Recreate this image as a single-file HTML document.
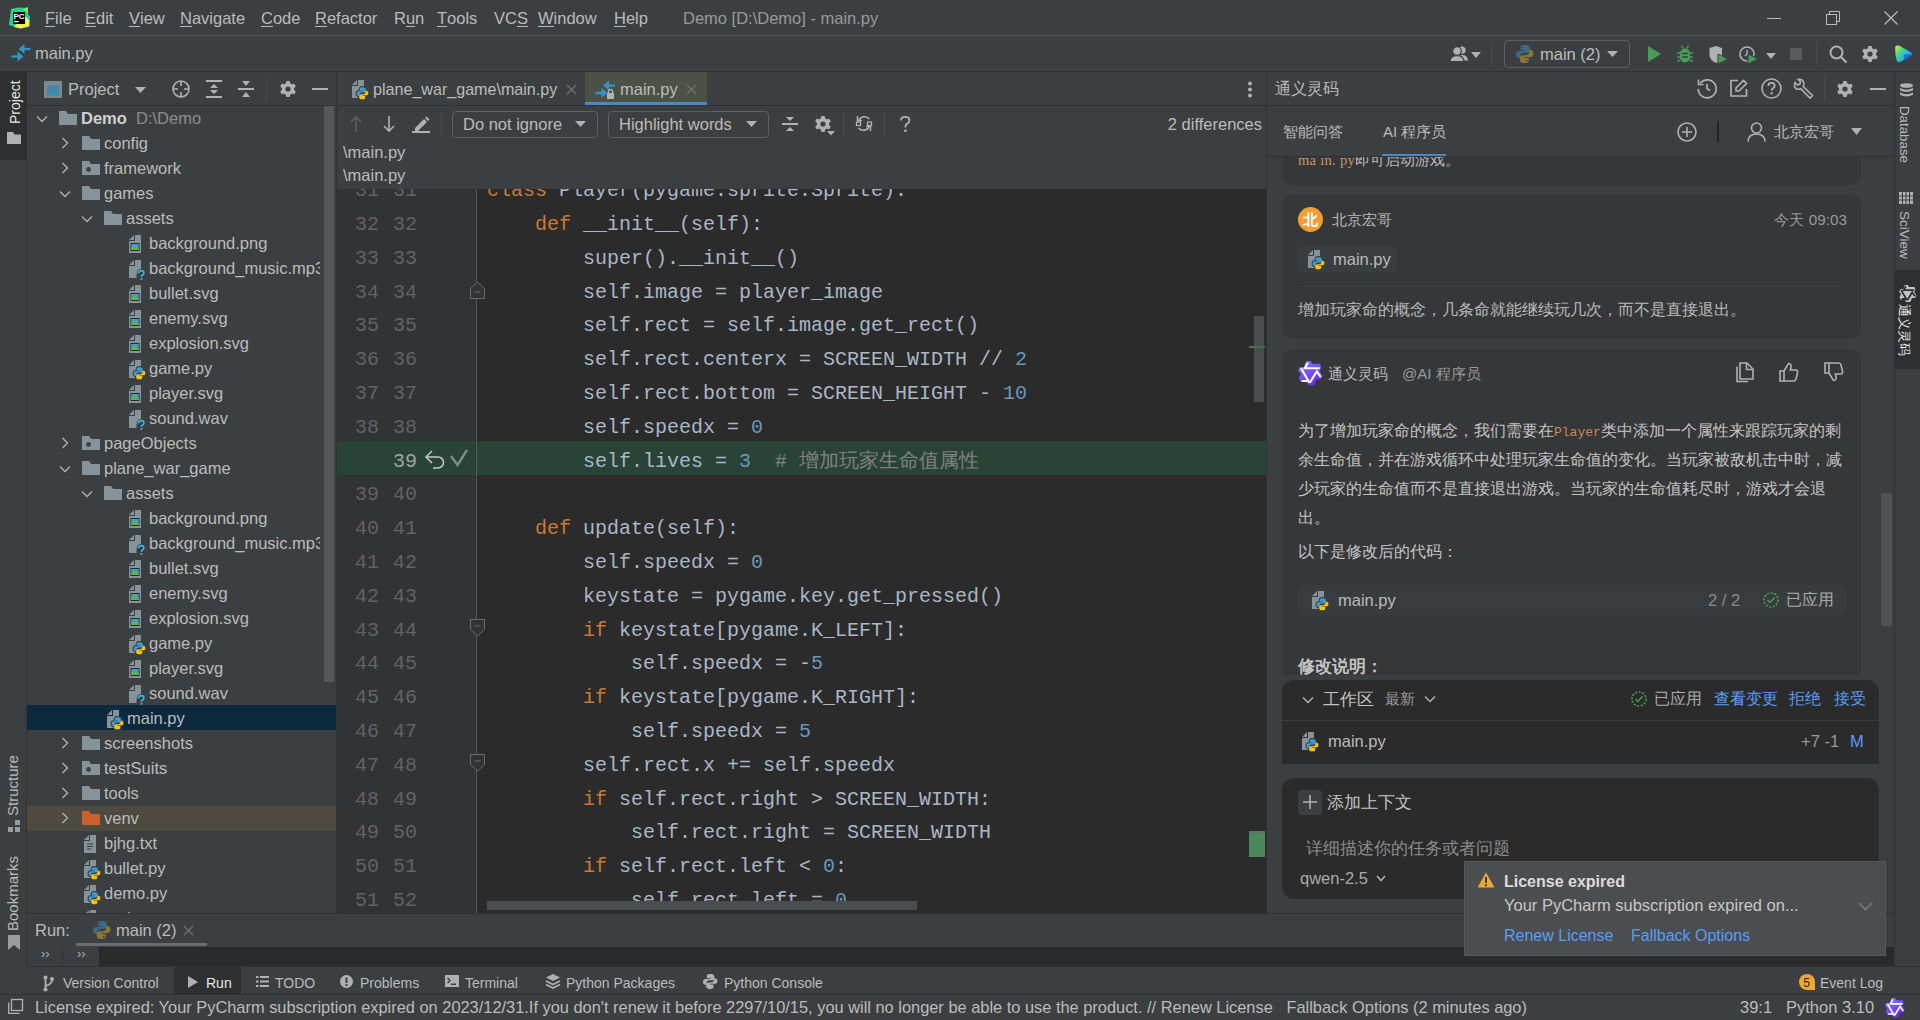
<!DOCTYPE html><html><head><meta charset="utf-8"><style>
*{margin:0;padding:0;box-sizing:border-box}
html,body{width:1920px;height:1020px;overflow:hidden;background:#3c3f41;font-family:"Liberation Sans",sans-serif;color:#bbbbbb;font-size:16.5px}
.a{position:absolute}
.t{position:absolute;white-space:nowrap;line-height:20px}
.m{position:absolute;white-space:pre;font-family:"Liberation Mono",monospace;font-size:20px;line-height:24px;color:#a9b7c6}
svg{position:absolute;overflow:visible}
u{text-decoration:none;border-bottom:1px solid #bbb;line-height:15px;display:inline-block}
.k{color:#cc7832}.n{color:#6897bb}.c{color:#808080}
</style></head><body>
<svg width="0" height="0" style="position:absolute">
<defs>
<symbol id="folder" viewBox="0 0 18 14"><path d="M0 0 H7 L9 3 H18 V14 H0 Z" fill="#87939a"/></symbol>
<symbol id="modfolder" viewBox="0 0 18 14"><path d="M0 0 H7 L9 3 H18 V14 H0 Z" fill="#87939a"/><circle cx="6.5" cy="8.5" r="2.4" fill="#3c3f41"/></symbol>
<symbol id="venvfolder" viewBox="0 0 18 14"><path d="M0 0 H7 L9 3 H18 V14 H0 Z" fill="#c9602e"/></symbol>
<symbol id="chevR" viewBox="0 0 8 12"><path d="M1.5 1 L6.5 6 L1.5 11" fill="none" stroke="#afb1b3" stroke-width="1.4"/></symbol>
<symbol id="chevD" viewBox="0 0 12 8"><path d="M1 1.5 L6 6.5 L11 1.5" fill="none" stroke="#afb1b3" stroke-width="1.4"/></symbol>
<symbol id="page" viewBox="0 0 17 20"><path d="M0 5 L5 0 V5 Z" fill="#87939a"/><path d="M6 0 H12 V18 H0 V6 H6 Z" fill="#87939a"/></symbol>
<symbol id="imgfile" viewBox="0 0 17 20"><path d="M0 5 L5 0 V5 Z" fill="#87939a"/><path d="M6 0 H12 V18 H0 V6 H6 Z" fill="#87939a"/><rect x="1.5" y="8" width="9" height="8" fill="#2b2b2b"/><rect x="2.3" y="9" width="7.4" height="6" fill="#40a0c8"/><path d="M2.3 15 V12.5 Q4 10.5 6 11.8 Q8 13 9.7 13.6 V15 Z" fill="#62b543"/></symbol>
<symbol id="unkfile" viewBox="0 0 17 20"><path d="M0 5 L5 0 V5 Z" fill="#87939a"/><path d="M6 0 H12 V11 Q7.5 11.5 7.5 15 V18 H0 V6 H6 Z" fill="#87939a"/><path d="M9.3 13.3 Q9.6 10.6 12.2 10.6 Q14.9 10.6 14.9 13 Q14.9 14.4 13.2 15.2 Q12.4 15.7 12.4 17" fill="none" stroke="#3c3f41" stroke-width="3"/><path d="M9.3 13.3 Q9.6 10.6 12.2 10.6 Q14.9 10.6 14.9 13 Q14.9 14.4 13.2 15.2 Q12.4 15.7 12.4 17" fill="none" stroke="#3fb2e6" stroke-width="1.6"/><rect x="11.5" y="18" width="1.8" height="1.8" fill="#3fb2e6"/></symbol>
<symbol id="txtfile" viewBox="0 0 17 20"><path d="M0 5 L5 0 V5 Z" fill="#87939a"/><path d="M6 0 H12 V18 H0 V6 H6 Z" fill="#87939a"/><path d="M3 9 H9 M3 11.5 H9 M3 14 H7" stroke="#3c3f41" stroke-width="1"/></symbol>
<symbol id="pylogo" viewBox="0 0 12 12.4"><path d="M5.6 0 C3.4 0 3.2 1 3.2 2.2 V3.6 H6.2 V4.2 H2 C0.7 4.2 0 5.2 0 6.6 C0 8 0.7 8.9 2 8.9 H3 V7.4 C3 6.1 4 5.3 5.2 5.3 H7.6 C8.6 5.3 9.4 4.5 9.4 3.5 V2.2 C9.4 1 8.4 0 6.9 0 Z" fill="#3d9ad6"/><path d="M5.6 0 C3.4 0 3.2 1 3.2 2.2 V3.6 H6.2 V4.2 H2 C0.7 4.2 0 5.2 0 6.6 C0 8 0.7 8.9 2 8.9 H3 V7.4 C3 6.1 4 5.3 5.2 5.3 H7.6 C8.6 5.3 9.4 4.5 9.4 3.5 V2.2 C9.4 1 8.4 0 6.9 0 Z" fill="#f2c40f" transform="rotate(180 6 6.2)"/></symbol>
<symbol id="pyfile" viewBox="0 0 17 20"><path d="M0 5 L5 0 V5 Z" fill="#87939a"/><path d="M6 0 H12 V18 H0 V6 H6 Z" fill="#87939a"/><g transform="translate(4.6,7.2) scale(0.98)"><path d="M5.6 0 C3.4 0 3.2 1 3.2 2.2 V3.6 H6.2 V4.2 H2 C0.7 4.2 0 5.2 0 6.6 C0 8 0.7 8.9 2 8.9 H3 V7.4 C3 6.1 4 5.3 5.2 5.3 H7.6 C8.6 5.3 9.4 4.5 9.4 3.5 V2.2 C9.4 1 8.4 0 6.9 0 Z" fill="none" stroke="#3c3f41" stroke-width="2.2" /><path d="M5.6 0 C3.4 0 3.2 1 3.2 2.2 V3.6 H6.2 V4.2 H2 C0.7 4.2 0 5.2 0 6.6 C0 8 0.7 8.9 2 8.9 H3 V7.4 C3 6.1 4 5.3 5.2 5.3 H7.6 C8.6 5.3 9.4 4.5 9.4 3.5 V2.2 C9.4 1 8.4 0 6.9 0 Z" fill="none" stroke="#3c3f41" stroke-width="2.2" transform="rotate(180 6 6.2)"/><path d="M5.6 0 C3.4 0 3.2 1 3.2 2.2 V3.6 H6.2 V4.2 H2 C0.7 4.2 0 5.2 0 6.6 C0 8 0.7 8.9 2 8.9 H3 V7.4 C3 6.1 4 5.3 5.2 5.3 H7.6 C8.6 5.3 9.4 4.5 9.4 3.5 V2.2 C9.4 1 8.4 0 6.9 0 Z" fill="#3d9ad6"/><path d="M5.6 0 C3.4 0 3.2 1 3.2 2.2 V3.6 H6.2 V4.2 H2 C0.7 4.2 0 5.2 0 6.6 C0 8 0.7 8.9 2 8.9 H3 V7.4 C3 6.1 4 5.3 5.2 5.3 H7.6 C8.6 5.3 9.4 4.5 9.4 3.5 V2.2 C9.4 1 8.4 0 6.9 0 Z" fill="#f2c40f" transform="rotate(180 6 6.2)"/></g></symbol>
</defs></svg>
<div class="a" style="left:0px;top:35px;width:1920px;height:1px;background:#515151;"></div>
<div class="a" style="left:0px;top:71px;width:1920px;height:1px;background:#323232;"></div>
<div class="a" style="left:0px;top:72px;width:27px;height:894px;background:#3c3f41;border-right:1px solid #323232"></div>
<div class="a" style="left:0px;top:72px;width:27px;height:88px;background:#2d2f30;"></div>
<div class="a" style="left:27px;top:105px;width:309px;height:1px;background:#323232;"></div>
<div class="a" style="left:27px;top:705px;width:309px;height:25px;background:#0d293e;"></div>
<div class="a" style="left:27px;top:806px;width:309px;height:25px;background:#4e4a3f;"></div>
<div class="a" style="left:324px;top:106px;width:10px;height:576px;background:#555759;"></div>
<div class="a" style="left:336px;top:72px;width:1px;height:841px;background:#323232;"></div>
<div class="a" style="left:337px;top:105px;width:930px;height:1px;background:#323232;"></div>
<div class="a" style="left:337px;top:189px;width:140px;height:724px;background:#313335;"></div>
<div class="a" style="left:477px;top:189px;width:790px;height:724px;background:#2b2b2b;"></div>
<div class="a" style="left:337px;top:441px;width:930px;height:34px;background:#294436;"></div>
<div class="a" style="left:476px;top:189px;width:1px;height:724px;background:#555555;"></div>
<div class="a" style="left:1266px;top:72px;width:1px;height:841px;background:#323232;"></div>
<div class="a" style="left:1267px;top:105px;width:627px;height:1px;background:#323232;"></div>
<div class="a" style="left:1267px;top:156px;width:627px;height:1px;background:#323232;"></div>
<div class="a" style="left:1894px;top:72px;width:1px;height:894px;background:#323232;"></div>
<div class="a" style="left:1895px;top:270px;width:25px;height:99px;background:#2d2f30;"></div>
<div class="a" style="left:27px;top:913px;width:1867px;height:1px;background:#323232;"></div>
<div class="a" style="left:99px;top:947px;width:1795px;height:19px;background:#2b2b2b;"></div>
<div class="a" style="left:27px;top:966px;width:1893px;height:1px;background:#323232;"></div>
<div class="a" style="left:174px;top:967px;width:67px;height:27px;background:#2d2f30;"></div>
<div class="a" style="left:0px;top:994px;width:1920px;height:1px;background:#323232;"></div>
<svg style="left:8px;top:7px" width="22" height="22" viewBox="0 0 22 22"><defs><linearGradient id="pcg" x1="0" y1="0" x2="0.3" y2="1"><stop offset="0" stop-color="#21d789"/><stop offset="1" stop-color="#2bd0a0"/></linearGradient></defs>
<path d="M3 2 L11 0.5 L20 1 L20 7 L22 10 L21 20 L12 21.5 L1 18 Z" fill="url(#pcg)"/><path d="M6 20 L13 12 L21 9 L21.5 19 L13 21.5Z" fill="#f4f34a"/><path d="M17 7 L22 10 L20 13Z" fill="#07c3f2"/><path d="M15 2 L20 0 L20 6Z" fill="#7fe560"/>
<rect x="5" y="5" width="12" height="12" fill="#000"/>
<text x="5.6" y="11.6" font-size="8" fill="#fff" font-family="Liberation Sans" font-weight="bold" letter-spacing="-0.3">PC</text><rect x="6" y="14" width="4.6" height="1.2" fill="#fff"/></svg>
<div class="t" style="left:45px;top:8px;"><u>F</u>ile</div>
<div class="t" style="left:85px;top:8px;"><u>E</u>dit</div>
<div class="t" style="left:129px;top:8px;"><u>V</u>iew</div>
<div class="t" style="left:180px;top:8px;"><u>N</u>avigate</div>
<div class="t" style="left:261px;top:8px;"><u>C</u>ode</div>
<div class="t" style="left:315px;top:8px;"><u>R</u>efactor</div>
<div class="t" style="left:394px;top:8px;">R<u>u</u>n</div>
<div class="t" style="left:437px;top:8px;"><u>T</u>ools</div>
<div class="t" style="left:494px;top:8px;">VC<u>S</u></div>
<div class="t" style="left:538px;top:8px;"><u>W</u>indow</div>
<div class="t" style="left:614px;top:8px;"><u>H</u>elp</div>
<div class="t" style="left:683px;top:8px;color:#999">Demo [D:\Demo] - main.py</div>
<div class="a" style="left:1767px;top:18px;width:14px;height:1px;background:#bbb;"></div>
<svg style="left:1826px;top:11px" width="14" height="14" viewBox="0 0 14 14"><rect x="0.5" y="3.5" width="10" height="10" fill="none" stroke="#bbb"/><path d="M3.5 3.5 V0.5 H13.5 V10.5 H10.5" fill="none" stroke="#bbb"/></svg>
<svg style="left:1884px;top:11px" width="14" height="14" viewBox="0 0 14 14"><path d="M0.5 0.5 L13.5 13.5 M13.5 0.5 L0.5 13.5" stroke="#bbb" stroke-width="1.2"/></svg>
<svg style="left:11px;top:44px" width="20" height="18" viewBox="0 0 20 18"><path d="M19.5 5 H12" stroke="#3592c4" stroke-width="2.4"/><path d="M7.5 5 L13.5 0 V10Z" fill="#3592c4"/><path d="M0.5 12.5 H8" stroke="#3592c4" stroke-width="2.4"/><path d="M12.5 12.5 L6.5 7.5 V17.5Z" fill="#3592c4"/></svg>
<div class="t" style="left:35px;top:43px;">main.py</div>
<div class="t" style="left:6px;top:124px;transform-origin:0 0;transform:rotate(-90deg);font-size:14px;color:#e6e6e6;line-height:18px">Project</div>
<svg style="left:7px;top:132px" width="14" height="12" viewBox="0 0 14 12"><path d="M0 0 H6 L7.5 2.5 H14 V12 H0Z" fill="#afb1b3"/></svg>
<div class="t" style="left:4px;top:816px;transform-origin:0 0;transform:rotate(-90deg);font-size:15px;color:#bbb;line-height:18px">Structure</div>
<svg style="left:8px;top:820px" width="13" height="13" viewBox="0 0 13 13"><rect x="7" y="0" width="5" height="5" fill="#9a9da0"/><rect x="0" y="7" width="5" height="5" fill="#9a9da0"/><rect x="7" y="7" width="5" height="5" fill="#9a9da0"/></svg>
<div class="t" style="left:4px;top:931px;transform-origin:0 0;transform:rotate(-90deg);font-size:15px;color:#bbb;line-height:18px">Bookmarks</div>
<svg style="left:8px;top:935px" width="12" height="15" viewBox="0 0 12 15"><path d="M0 0 H12 V15 L6 10 L0 15Z" fill="#9a9da0"/></svg>
<svg style="left:44px;top:81px" width="18" height="17" viewBox="0 0 18 17"><rect x="0" y="0" width="18" height="17" fill="#7f878c"/><rect x="3" y="4.5" width="12" height="10" fill="#3e8aab"/></svg>
<div class="t" style="left:68px;top:79px;">Project</div>
<svg style="left:135px;top:87px" width="11" height="6" viewBox="0 0 11 6"><path d="M0 0 H11 L5.5 6Z" fill="#afb1b3"/></svg>
<svg style="left:172px;top:80px" width="18" height="18" viewBox="0 0 18 18"><circle cx="9" cy="9" r="8" fill="none" stroke="#afb1b3" stroke-width="1.6"/><path d="M9 1 V6 M9 12 V17 M1 9 H6 M12 9 H17" stroke="#afb1b3" stroke-width="1.6"/></svg>
<svg style="left:206px;top:80px" width="16" height="18" viewBox="0 0 16 18"><rect x="0" y="0" width="16" height="2" fill="#afb1b3"/><rect x="0" y="16" width="16" height="2" fill="#afb1b3"/><path d="M8 4 L12 8 H4Z M8 14 L12 10 H4Z" fill="#afb1b3"/></svg>
<svg style="left:238px;top:80px" width="16" height="18" viewBox="0 0 16 18"><rect x="0" y="8" width="16" height="2" fill="#afb1b3"/><path d="M8 6 L12 1 H4Z M8 12 L12 17 H4Z" fill="#afb1b3"/></svg>
<div class="a" style="left:266px;top:77px;width:1px;height:24px;background:#4a4c4e;"></div>
<svg style="left:279px;top:80px" width="18" height="18" viewBox="0 0 18 18"><g transform="scale(1.0)"><path d="M9 9 m-1.6 -8 h3.2 l0.5 2.3 a6 6 0 0 1 1.9 1.1 l2.2 -0.8 l1.6 2.8 l-1.8 1.5 a6 6 0 0 1 0 2.2 l1.8 1.5 l-1.6 2.8 l-2.2 -0.8 a6 6 0 0 1 -1.9 1.1 l-0.5 2.3 h-3.2 l-0.5 -2.3 a6 6 0 0 1 -1.9 -1.1 l-2.2 0.8 l-1.6 -2.8 l1.8 -1.5 a6 6 0 0 1 0 -2.2 l-1.8 -1.5 l1.6 -2.8 l2.2 0.8 a6 6 0 0 1 1.9 -1.1z" fill="#afb1b3"/><circle cx="9" cy="9" r="2.6" fill="#3c3f41"/></g></svg>
<div class="a" style="left:312px;top:88px;width:16px;height:2px;background:#afb1b3;"></div>
<div class="a" style="left:27px;top:106px;width:293px;height:807px;overflow:hidden">
<svg style="left:9px;top:9px" width="12" height="8"><use href="#chevD"/></svg>
<svg style="left:32px;top:5px" width="18" height="14"><use href="#folder"/></svg>
<div class="t" style="left:54px;top:2px;"><b style="color:#d0d0d0">Demo</b>&nbsp; <span style="color:#8c8c8c">D:\Demo</span></div>
<svg style="left:34px;top:31px" width="8" height="12"><use href="#chevR"/></svg>
<svg style="left:55px;top:30px" width="18" height="14"><use href="#folder"/></svg>
<div class="t" style="left:77px;top:27px;">config</div>
<svg style="left:34px;top:56px" width="8" height="12"><use href="#chevR"/></svg>
<svg style="left:55px;top:55px" width="18" height="14"><use href="#modfolder"/></svg>
<div class="t" style="left:77px;top:52px;">framework</div>
<svg style="left:32px;top:84px" width="12" height="8"><use href="#chevD"/></svg>
<svg style="left:55px;top:80px" width="18" height="14"><use href="#folder"/></svg>
<div class="t" style="left:77px;top:77px;">games</div>
<svg style="left:54px;top:109px" width="12" height="8"><use href="#chevD"/></svg>
<svg style="left:77px;top:105px" width="18" height="14"><use href="#folder"/></svg>
<div class="t" style="left:99px;top:102px;">assets</div>
<svg style="left:102px;top:129px" width="17" height="20"><use href="#imgfile"/></svg>
<div class="t" style="left:122px;top:127px;">background.png</div>
<svg style="left:102px;top:154px" width="17" height="20"><use href="#unkfile"/></svg>
<div class="t" style="left:122px;top:152px;">background_music.mp3</div>
<svg style="left:102px;top:179px" width="17" height="20"><use href="#imgfile"/></svg>
<div class="t" style="left:122px;top:177px;">bullet.svg</div>
<svg style="left:102px;top:204px" width="17" height="20"><use href="#imgfile"/></svg>
<div class="t" style="left:122px;top:202px;">enemy.svg</div>
<svg style="left:102px;top:229px" width="17" height="20"><use href="#imgfile"/></svg>
<div class="t" style="left:122px;top:227px;">explosion.svg</div>
<svg style="left:102px;top:254px" width="17" height="20"><use href="#pyfile"/></svg>
<div class="t" style="left:122px;top:252px;">game.py</div>
<svg style="left:102px;top:279px" width="17" height="20"><use href="#imgfile"/></svg>
<div class="t" style="left:122px;top:277px;">player.svg</div>
<svg style="left:102px;top:304px" width="17" height="20"><use href="#unkfile"/></svg>
<div class="t" style="left:122px;top:302px;">sound.wav</div>
<svg style="left:34px;top:331px" width="8" height="12"><use href="#chevR"/></svg>
<svg style="left:55px;top:330px" width="18" height="14"><use href="#modfolder"/></svg>
<div class="t" style="left:77px;top:327px;">pageObjects</div>
<svg style="left:32px;top:359px" width="12" height="8"><use href="#chevD"/></svg>
<svg style="left:55px;top:355px" width="18" height="14"><use href="#folder"/></svg>
<div class="t" style="left:77px;top:352px;">plane_war_game</div>
<svg style="left:54px;top:384px" width="12" height="8"><use href="#chevD"/></svg>
<svg style="left:77px;top:380px" width="18" height="14"><use href="#folder"/></svg>
<div class="t" style="left:99px;top:377px;">assets</div>
<svg style="left:102px;top:404px" width="17" height="20"><use href="#imgfile"/></svg>
<div class="t" style="left:122px;top:402px;">background.png</div>
<svg style="left:102px;top:429px" width="17" height="20"><use href="#unkfile"/></svg>
<div class="t" style="left:122px;top:427px;">background_music.mp3</div>
<svg style="left:102px;top:454px" width="17" height="20"><use href="#imgfile"/></svg>
<div class="t" style="left:122px;top:452px;">bullet.svg</div>
<svg style="left:102px;top:479px" width="17" height="20"><use href="#imgfile"/></svg>
<div class="t" style="left:122px;top:477px;">enemy.svg</div>
<svg style="left:102px;top:504px" width="17" height="20"><use href="#imgfile"/></svg>
<div class="t" style="left:122px;top:502px;">explosion.svg</div>
<svg style="left:102px;top:529px" width="17" height="20"><use href="#pyfile"/></svg>
<div class="t" style="left:122px;top:527px;">game.py</div>
<svg style="left:102px;top:554px" width="17" height="20"><use href="#imgfile"/></svg>
<div class="t" style="left:122px;top:552px;">player.svg</div>
<svg style="left:102px;top:579px" width="17" height="20"><use href="#unkfile"/></svg>
<div class="t" style="left:122px;top:577px;">sound.wav</div>
<svg style="left:80px;top:604px" width="17" height="20"><use href="#pyfile"/></svg>
<div class="t" style="left:100px;top:602px;">main.py</div>
<svg style="left:34px;top:631px" width="8" height="12"><use href="#chevR"/></svg>
<svg style="left:55px;top:630px" width="18" height="14"><use href="#folder"/></svg>
<div class="t" style="left:77px;top:627px;">screenshots</div>
<svg style="left:34px;top:656px" width="8" height="12"><use href="#chevR"/></svg>
<svg style="left:55px;top:655px" width="18" height="14"><use href="#modfolder"/></svg>
<div class="t" style="left:77px;top:652px;">testSuits</div>
<svg style="left:34px;top:681px" width="8" height="12"><use href="#chevR"/></svg>
<svg style="left:55px;top:680px" width="18" height="14"><use href="#folder"/></svg>
<div class="t" style="left:77px;top:677px;">tools</div>
<svg style="left:34px;top:706px" width="8" height="12"><use href="#chevR"/></svg>
<svg style="left:55px;top:705px" width="18" height="14"><use href="#venvfolder"/></svg>
<div class="t" style="left:77px;top:702px;">venv</div>
<svg style="left:57px;top:729px" width="17" height="20"><use href="#txtfile"/></svg>
<div class="t" style="left:77px;top:727px;">bjhg.txt</div>
<svg style="left:57px;top:754px" width="17" height="20"><use href="#pyfile"/></svg>
<div class="t" style="left:77px;top:752px;">bullet.py</div>
<svg style="left:57px;top:779px" width="17" height="20"><use href="#pyfile"/></svg>
<div class="t" style="left:77px;top:777px;">demo.py</div>
<svg style="left:57px;top:804px" width="17" height="20"><use href="#pyfile"/></svg>
<div class="t" style="left:77px;top:802px;">main.py</div>
</div>
<svg style="left:352px;top:80px" width="17" height="20"><use href="#pyfile"/></svg>
<div class="t" style="left:373px;top:79px;font-size:16.1px">plane_war_game\main.py</div>
<svg style="left:567px;top:85px" width="9" height="9" viewBox="0 0 9 9"><path d="M0 0 L9 9 M9 0 L0 9" stroke="#6f7173" stroke-width="1.3"/></svg>
<div class="a" style="left:585px;top:72px;width:122px;height:33px;background:#4b5146;"></div>
<div class="a" style="left:585px;top:102px;width:122px;height:3px;background:#4a88c7;"></div>
<svg style="left:595px;top:80px" width="22" height="20" viewBox="0 0 22 20"><path d="M20 5.5 H12.5" stroke="#3592c4" stroke-width="2.4"/><path d="M8 5.5 L14 0.5 V10.5Z" fill="#3592c4"/><path d="M0.5 13 H8" stroke="#3592c4" stroke-width="2.4"/><path d="M12.5 13 L6.5 8 V18Z" fill="#3592c4"/><rect x="12" y="13" width="7" height="6" fill="#afb1b3"/><path d="M13.5 13 V11.5 A2 2 0 0 1 17.5 11.5 V13" fill="none" stroke="#afb1b3" stroke-width="1.3"/></svg>
<div class="t" style="left:620px;top:79px;">main.py</div>
<svg style="left:687px;top:85px" width="9" height="9" viewBox="0 0 9 9"><path d="M0 0 L9 9 M9 0 L0 9" stroke="#6f7173" stroke-width="1.3"/></svg>
<svg style="left:1247px;top:81px" width="6" height="18" viewBox="0 0 6 18"><circle cx="3" cy="2.5" r="2" fill="#afb1b3"/><circle cx="3" cy="8.5" r="2" fill="#afb1b3"/><circle cx="3" cy="14.5" r="2" fill="#afb1b3"/></svg>
<svg style="left:350px;top:116px" width="12" height="16" viewBox="0 0 12 16"><path d="M6 1 V16 M1 6 L6 1 L11 6" fill="none" stroke="#5f6163" stroke-width="1.6"/></svg>
<svg style="left:383px;top:116px" width="12" height="16" viewBox="0 0 12 16"><path d="M6 0 V15 M1 10 L6 15 L11 10" fill="none" stroke="#afb1b3" stroke-width="1.6"/></svg>
<svg style="left:412px;top:115px" width="18" height="18" viewBox="0 0 18 18"><path d="M3 13 L12 4 L15 7 L6 16 H3Z" fill="#afb1b3"/><path d="M13 3 L14.5 1.5 L17.5 4.5 L16 6Z" fill="#afb1b3"/><rect x="0" y="16" width="18" height="2" fill="#afb1b3"/></svg>
<div class="a" style="left:441px;top:112px;width:1px;height:24px;background:#4a4c4e;"></div>
<div class="a" style="left:452px;top:111px;width:146px;height:27px;border:1px solid #5e6060;border-radius:4px"></div>
<div class="t" style="left:463px;top:114px;">Do not ignore</div>
<svg style="left:575px;top:121px" width="11" height="6" viewBox="0 0 11 6"><path d="M0 0 H11 L5.5 6Z" fill="#afb1b3"/></svg>
<div class="a" style="left:608px;top:111px;width:161px;height:27px;border:1px solid #5e6060;border-radius:4px"></div>
<div class="t" style="left:619px;top:114px;">Highlight words</div>
<svg style="left:746px;top:121px" width="11" height="6" viewBox="0 0 11 6"><path d="M0 0 H11 L5.5 6Z" fill="#afb1b3"/></svg>
<svg style="left:782px;top:116px" width="16" height="16" viewBox="0 0 16 16"><rect x="0" y="7" width="16" height="2" fill="#afb1b3"/><path d="M8 5 L12 1 H4Z M8 11 L12 15 H4Z" fill="#afb1b3"/></svg>
<svg style="left:814px;top:115px" width="18" height="18" viewBox="0 0 18 18"><g transform="scale(1.0)"><path d="M9 9 m-1.6 -8 h3.2 l0.5 2.3 a6 6 0 0 1 1.9 1.1 l2.2 -0.8 l1.6 2.8 l-1.8 1.5 a6 6 0 0 1 0 2.2 l1.8 1.5 l-1.6 2.8 l-2.2 -0.8 a6 6 0 0 1 -1.9 1.1 l-0.5 2.3 h-3.2 l-0.5 -2.3 a6 6 0 0 1 -1.9 -1.1 l-2.2 0.8 l-1.6 -2.8 l1.8 -1.5 a6 6 0 0 1 0 -2.2 l-1.8 -1.5 l1.6 -2.8 l2.2 0.8 a6 6 0 0 1 1.9 -1.1z" fill="#afb1b3"/><circle cx="9" cy="9" r="2.6" fill="#3c3f41"/></g></svg>
<svg style="left:827px;top:131px" width="8" height="5" viewBox="0 0 8 5"><path d="M0 0 H8 L4 4.5Z" fill="#afb1b3"/></svg>
<div class="a" style="left:843px;top:112px;width:1px;height:24px;background:#4a4c4e;"></div>
<svg style="left:856px;top:114px" width="16" height="19" viewBox="0 0 16 19"><path d="M3 6 A6.5 6.5 0 0 1 13.5 5" fill="none" stroke="#afb1b3" stroke-width="1.6"/><path d="M1.5 2 V6.5 H6" fill="none" stroke="#afb1b3" stroke-width="1.5"/><path d="M13 13 A6.5 6.5 0 0 1 2.5 14" fill="none" stroke="#afb1b3" stroke-width="1.6"/><path d="M14.5 17 V12.5 H10" fill="none" stroke="#afb1b3" stroke-width="1.5"/><rect x="0.5" y="8" width="4" height="3.5" fill="none" stroke="#afb1b3" stroke-width="1.3"/><rect x="11.5" y="8" width="4" height="3.5" fill="none" stroke="#afb1b3" stroke-width="1.3"/></svg>
<div class="a" style="left:884px;top:112px;width:1px;height:24px;background:#4a4c4e;"></div>
<svg style="left:900px;top:116px" width="11" height="17" viewBox="0 0 11 17"><path d="M1 4.5 Q1 0.9 5.2 0.9 Q9.4 0.9 9.4 4.3 Q9.4 6.4 7.3 7.6 Q5.4 8.7 5.4 10.8 V11.6" fill="none" stroke="#afb1b3" stroke-width="1.9"/><rect x="4.3" y="13.6" width="2.3" height="2.3" fill="#afb1b3"/></svg>
<div class="t" style="left:1262px;top:114px;transform:translateX(-100%)">2 differences</div>
<div class="t" style="left:343px;top:142px;">\main.py</div>
<div class="t" style="left:343px;top:165px;">\main.py</div>
<div class="a" style="left:337px;top:189px;width:929px;height:724px;overflow:hidden">
<div class="m" style="left:18px;top:-9.8px;color:#606366">31</div>
<div class="m" style="left:56px;top:-9.8px;color:#606366">31</div>
<div class="m" style="left:150px;top:-9.8px"><span class="k">class</span> Player(pygame.sprite.Sprite):</div>
<div class="m" style="left:18px;top:24.0px;color:#606366">32</div>
<div class="m" style="left:56px;top:24.0px;color:#606366">32</div>
<div class="m" style="left:150px;top:24.0px">    <span class="k">def</span> __init__(self):</div>
<div class="m" style="left:18px;top:57.8px;color:#606366">33</div>
<div class="m" style="left:56px;top:57.8px;color:#606366">33</div>
<div class="m" style="left:150px;top:57.8px">        super().__init__()</div>
<div class="m" style="left:18px;top:91.6px;color:#606366">34</div>
<div class="m" style="left:56px;top:91.6px;color:#606366">34</div>
<div class="m" style="left:150px;top:91.6px">        self.image = player_image</div>
<div class="m" style="left:18px;top:125.4px;color:#606366">35</div>
<div class="m" style="left:56px;top:125.4px;color:#606366">35</div>
<div class="m" style="left:150px;top:125.4px">        self.rect = self.image.get_rect()</div>
<div class="m" style="left:18px;top:159.2px;color:#606366">36</div>
<div class="m" style="left:56px;top:159.2px;color:#606366">36</div>
<div class="m" style="left:150px;top:159.2px">        self.rect.centerx = SCREEN_WIDTH // <span class="n">2</span></div>
<div class="m" style="left:18px;top:193.0px;color:#606366">37</div>
<div class="m" style="left:56px;top:193.0px;color:#606366">37</div>
<div class="m" style="left:150px;top:193.0px">        self.rect.bottom = SCREEN_HEIGHT - <span class="n">10</span></div>
<div class="m" style="left:18px;top:226.8px;color:#606366">38</div>
<div class="m" style="left:56px;top:226.8px;color:#606366">38</div>
<div class="m" style="left:150px;top:226.8px">        self.speedx = <span class="n">0</span></div>
<div class="m" style="left:56px;top:260.6px;color:#a4a3a3">39</div>
<div class="m" style="left:150px;top:260.6px">        self.lives = <span class="n">3</span>  <span class="c"># 增加玩家生命值属性</span></div>
<div class="m" style="left:18px;top:294.4px;color:#606366">39</div>
<div class="m" style="left:56px;top:294.4px;color:#606366">40</div>
<div class="m" style="left:150px;top:294.4px"></div>
<div class="m" style="left:18px;top:328.2px;color:#606366">40</div>
<div class="m" style="left:56px;top:328.2px;color:#606366">41</div>
<div class="m" style="left:150px;top:328.2px">    <span class="k">def</span> update(self):</div>
<div class="m" style="left:18px;top:362.0px;color:#606366">41</div>
<div class="m" style="left:56px;top:362.0px;color:#606366">42</div>
<div class="m" style="left:150px;top:362.0px">        self.speedx = <span class="n">0</span></div>
<div class="m" style="left:18px;top:395.8px;color:#606366">42</div>
<div class="m" style="left:56px;top:395.8px;color:#606366">43</div>
<div class="m" style="left:150px;top:395.8px">        keystate = pygame.key.get_pressed()</div>
<div class="m" style="left:18px;top:429.6px;color:#606366">43</div>
<div class="m" style="left:56px;top:429.6px;color:#606366">44</div>
<div class="m" style="left:150px;top:429.6px">        <span class="k">if</span> keystate[pygame.K_LEFT]:</div>
<div class="m" style="left:18px;top:463.4px;color:#606366">44</div>
<div class="m" style="left:56px;top:463.4px;color:#606366">45</div>
<div class="m" style="left:150px;top:463.4px">            self.speedx = -<span class="n">5</span></div>
<div class="m" style="left:18px;top:497.2px;color:#606366">45</div>
<div class="m" style="left:56px;top:497.2px;color:#606366">46</div>
<div class="m" style="left:150px;top:497.2px">        <span class="k">if</span> keystate[pygame.K_RIGHT]:</div>
<div class="m" style="left:18px;top:531.0px;color:#606366">46</div>
<div class="m" style="left:56px;top:531.0px;color:#606366">47</div>
<div class="m" style="left:150px;top:531.0px">            self.speedx = <span class="n">5</span></div>
<div class="m" style="left:18px;top:564.8px;color:#606366">47</div>
<div class="m" style="left:56px;top:564.8px;color:#606366">48</div>
<div class="m" style="left:150px;top:564.8px">        self.rect.x += self.speedx</div>
<div class="m" style="left:18px;top:598.6px;color:#606366">48</div>
<div class="m" style="left:56px;top:598.6px;color:#606366">49</div>
<div class="m" style="left:150px;top:598.6px">        <span class="k">if</span> self.rect.right &gt; SCREEN_WIDTH:</div>
<div class="m" style="left:18px;top:632.4px;color:#606366">49</div>
<div class="m" style="left:56px;top:632.4px;color:#606366">50</div>
<div class="m" style="left:150px;top:632.4px">            self.rect.right = SCREEN_WIDTH</div>
<div class="m" style="left:18px;top:666.2px;color:#606366">50</div>
<div class="m" style="left:56px;top:666.2px;color:#606366">51</div>
<div class="m" style="left:150px;top:666.2px">        <span class="k">if</span> self.rect.left &lt; <span class="n">0</span>:</div>
<div class="m" style="left:18px;top:700.0px;color:#606366">51</div>
<div class="m" style="left:56px;top:700.0px;color:#606366">52</div>
<div class="m" style="left:150px;top:700.0px">            self.rect.left = <span class="n">0</span></div>
<div class="m" style="left:18px;top:733.8px;color:#606366">52</div>
<div class="m" style="left:56px;top:733.8px;color:#606366">53</div>
<div class="m" style="left:150px;top:733.8px"></div>
</div>
<svg style="left:424px;top:449px" width="22" height="20" viewBox="0 0 22 20"><path d="M8 2 L2 8 L8 14" fill="none" stroke="#c8c8c8" stroke-width="1.5"/><path d="M2 8 H14 A5.5 5.5 0 0 1 14 19 H9" fill="none" stroke="#c8c8c8" stroke-width="1.5"/></svg>
<svg style="left:450px;top:449px" width="19" height="18" viewBox="0 0 19 18"><path d="M1 7 L7.5 16 L17 1" fill="none" stroke="#7d8a8e" stroke-width="2.4"/></svg>
<svg style="left:469px;top:281px" width="17" height="18" viewBox="0 0 17 18"><path d="M1.5 17.5 V7.5 L8.5 1 L15.5 7.5 V17.5Z" fill="#313335" stroke="#6b6d6f" stroke-width="1"/><path d="M5.5 11 H11.5" stroke="#6b6d6f"/></svg>
<svg style="left:469px;top:619px" width="17" height="18" viewBox="0 0 17 18"><path d="M1.5 0.5 V10.5 L8.5 17 L15.5 10.5 V0.5Z" fill="#313335" stroke="#6b6d6f" stroke-width="1"/><path d="M5.5 7 H11.5" stroke="#6b6d6f"/></svg>
<svg style="left:469px;top:754px" width="17" height="18" viewBox="0 0 17 18"><path d="M1.5 0.5 V10.5 L8.5 17 L15.5 10.5 V0.5Z" fill="#313335" stroke="#6b6d6f" stroke-width="1"/><path d="M5.5 7 H11.5" stroke="#6b6d6f"/></svg>
<div class="a" style="left:1254px;top:316px;width:10px;height:86px;background:#4b4d4f;"></div>
<div class="a" style="left:1249px;top:346px;width:16px;height:2px;background:#447152;"></div>
<div class="a" style="left:1249px;top:831px;width:16px;height:3px;background:#5b7a63;"></div>
<div class="a" style="left:1249px;top:834px;width:16px;height:23px;background:#4a8a5a;"></div>
<div class="a" style="left:487px;top:901px;width:430px;height:9px;background:#4a4c4e;"></div>
<svg style="left:1450px;top:46px" width="20" height="16" viewBox="0 0 20 16"><circle cx="12" cy="4.2" r="3.6" fill="#afb1b3"/><path d="M8 14.5 Q8.5 9 12.5 9 Q17.5 9 18 14.5Z" fill="#afb1b3"/><circle cx="7" cy="5" r="4.3" stroke="#3c3f41" stroke-width="1.2" fill="#afb1b3"/><path d="M0 15.5 Q0.3 9.6 7 9.6 Q13.7 9.6 14 15.5Z" fill="#afb1b3" stroke="#3c3f41" stroke-width="1.2"/></svg>
<svg style="left:1471px;top:52px" width="10" height="6" viewBox="0 0 10 6"><path d="M0 0 H10 L5 6Z" fill="#afb1b3"/></svg>
<div class="a" style="left:1491px;top:42px;width:1px;height:24px;background:#4a4c4e;"></div>
<div class="a" style="left:1504px;top:40px;width:126px;height:28px;border:1px solid #5e6060;border-radius:4px"></div>
<svg style="left:1516px;top:45px" width="18" height="18" viewBox="0 0 18 18"><g transform="scale(1.45)"><path d="M5.6 0 C3.4 0 3.2 1 3.2 2.2 V3.6 H6.2 V4.2 H2 C0.7 4.2 0 5.2 0 6.6 C0 8 0.7 8.9 2 8.9 H3 V7.4 C3 6.1 4 5.3 5.2 5.3 H7.6 C8.6 5.3 9.4 4.5 9.4 3.5 V2.2 C9.4 1 8.4 0 6.9 0 Z" fill="#3a6a8c"/><path d="M5.6 0 C3.4 0 3.2 1 3.2 2.2 V3.6 H6.2 V4.2 H2 C0.7 4.2 0 5.2 0 6.6 C0 8 0.7 8.9 2 8.9 H3 V7.4 C3 6.1 4 5.3 5.2 5.3 H7.6 C8.6 5.3 9.4 4.5 9.4 3.5 V2.2 C9.4 1 8.4 0 6.9 0 Z" fill="#8c7637" transform="rotate(180 6 6.2)"/><circle cx="4.6" cy="1.7" r="0.6" fill="#3c3f41"/><circle cx="7.4" cy="10.7" r="0.6" fill="#3c3f41"/></g></svg>
<div class="t" style="left:1540px;top:44px;">main (2)</div>
<svg style="left:1607px;top:51px" width="11" height="6" viewBox="0 0 11 6"><path d="M0 0 H11 L5.5 6Z" fill="#afb1b3"/></svg>
<svg style="left:1648px;top:46px" width="13" height="16" viewBox="0 0 13 16"><path d="M0 0 L13 8 L0 16Z" fill="#499c54"/></svg>
<svg style="left:1677px;top:45px" width="16" height="18" viewBox="0 0 16 18"><path d="M4.5 0.5 L6 3.5 M11.5 0.5 L10 3.5" stroke="#499c54" stroke-width="1.6"/><rect x="3" y="3.5" width="10" height="14" rx="5" fill="#499c54"/><path d="M0 8 H3 M13 8 H16 M0 12 H3 M13 12 H16 M0.5 16.5 L3 15 M15.5 16.5 L13 15" stroke="#499c54" stroke-width="1.6"/><path d="M5 8.5 H11 M5 12 H11" stroke="#3c3f41" stroke-width="1.5"/></svg>
<svg style="left:1709px;top:46px" width="20" height="17" viewBox="0 0 20 17"><path d="M0.5 2 L7 0 L13 2 V9 Q13 14 7 17 Q0.5 14 0.5 9Z" fill="#afb1b3"/><path d="M7 1 V16" stroke="#3c3f41" stroke-width="0"/><path d="M9 8 L19 13 L9 18Z" fill="#499c54" stroke="#3c3f41" stroke-width="1"/></svg>
<svg style="left:1739px;top:46px" width="20" height="18" viewBox="0 0 20 18"><circle cx="8" cy="8" r="7" fill="none" stroke="#afb1b3" stroke-width="1.6"/><path d="M8 4 V8 L6 10" fill="none" stroke="#afb1b3" stroke-width="1.5"/><path d="M9 8 L19 13 L9 18Z" fill="#499c54" stroke="#3c3f41" stroke-width="1"/></svg>
<svg style="left:1766px;top:53px" width="10" height="6" viewBox="0 0 10 6"><path d="M0 0 H10 L5 6Z" fill="#afb1b3"/></svg>
<div class="a" style="left:1790px;top:48px;width:12px;height:12px;background:#595b5d;"></div>
<div class="a" style="left:1816px;top:42px;width:1px;height:24px;background:#4a4c4e;"></div>
<svg style="left:1829px;top:45px" width="19" height="19" viewBox="0 0 19 19"><circle cx="7.5" cy="7.5" r="6" fill="none" stroke="#afb1b3" stroke-width="2"/><path d="M12 12 L17.5 17.5" stroke="#afb1b3" stroke-width="2.2"/></svg>
<svg style="left:1861px;top:45px" width="18" height="18" viewBox="0 0 18 18"><g transform="scale(1.0)"><path d="M9 9 m-1.6 -8 h3.2 l0.5 2.3 a6 6 0 0 1 1.9 1.1 l2.2 -0.8 l1.6 2.8 l-1.8 1.5 a6 6 0 0 1 0 2.2 l1.8 1.5 l-1.6 2.8 l-2.2 -0.8 a6 6 0 0 1 -1.9 1.1 l-0.5 2.3 h-3.2 l-0.5 -2.3 a6 6 0 0 1 -1.9 -1.1 l-2.2 0.8 l-1.6 -2.8 l1.8 -1.5 a6 6 0 0 1 0 -2.2 l-1.8 -1.5 l1.6 -2.8 l2.2 0.8 a6 6 0 0 1 1.9 -1.1z" fill="#afb1b3"/><circle cx="9" cy="9" r="2.6" fill="#3c3f41"/></g></svg>
<svg style="left:1894px;top:45px" width="19" height="18" viewBox="0 0 19 18"><defs><linearGradient id="tl" x1="0" y1="0" x2="1" y2="0.8"><stop offset="0" stop-color="#f3e83a"/><stop offset="0.35" stop-color="#4cd68a"/><stop offset="0.7" stop-color="#1fb8e8"/><stop offset="1" stop-color="#1f6ad8"/></linearGradient></defs><path d="M3.5 0.6 Q1 0.3 1.2 3.5 Q1 10 2.8 15.5 Q3.8 18.2 6.5 16.8 L17.2 10.6 Q19.4 9 17.2 7.4 L6 0.9 Q4.6 0.3 3.5 0.6Z" fill="url(#tl)"/><path d="M9.5 9.2 L18.6 9.2 L10.2 16Z" fill="#2256c8" opacity="0.75"/></svg>
<div class="t" style="left:1275px;top:79px;font-size:15.5px">通义灵码</div>
<svg style="left:1697px;top:78px" width="20" height="20" viewBox="0 0 20 20"><path d="M3.3 5 A9 9 0 1 1 1.2 11" fill="none" stroke="#afb1b3" stroke-width="1.7"/><path d="M1.5 1.5 V6.5 H6.5" fill="none" stroke="#afb1b3" stroke-width="1.7"/><path d="M10 6 V10.5 L13 12.5" fill="none" stroke="#afb1b3" stroke-width="1.7"/></svg>
<svg style="left:1730px;top:79px" width="18" height="18" viewBox="0 0 18 18"><path d="M8 1.5 H1 V17 H16.5 V10" fill="none" stroke="#afb1b3" stroke-width="1.7"/><path d="M6 12 V9 L13.5 1.5 L16.5 4.5 L9 12Z" fill="none" stroke="#afb1b3" stroke-width="1.6"/></svg>
<svg style="left:1761px;top:78px" width="21" height="21" viewBox="0 0 21 21"><circle cx="10.5" cy="10.5" r="9.5" fill="none" stroke="#afb1b3" stroke-width="1.6"/><path d="M7.3 8 Q7.3 4.8 10.5 4.8 Q13.7 4.8 13.7 7.8 Q13.7 9.5 11.8 10.4 Q10.7 11 10.7 12.6" fill="none" stroke="#afb1b3" stroke-width="1.8"/><rect x="9.5" y="14.2" width="2.2" height="2.2" fill="#afb1b3"/></svg>
<svg style="left:1793px;top:79px" width="21" height="21" viewBox="0 0 21 21"><path d="M2 3.5 L4.5 6 L7 5 L7.5 2.5 L5 0.5 Q9 -0.5 10.5 3 Q11.5 5.5 10.3 7.5 L19.5 16.5 L17 19 L7.8 9.8 Q5 11 2.8 9.3 Q0.5 7.5 2 3.5Z" fill="none" stroke="#afb1b3" stroke-width="1.6"/></svg>
<div class="a" style="left:1824px;top:77px;width:1px;height:24px;background:#4a4c4e;"></div>
<svg style="left:1836px;top:80px" width="18" height="18" viewBox="0 0 18 18"><g transform="scale(1.0)"><path d="M9 9 m-1.6 -8 h3.2 l0.5 2.3 a6 6 0 0 1 1.9 1.1 l2.2 -0.8 l1.6 2.8 l-1.8 1.5 a6 6 0 0 1 0 2.2 l1.8 1.5 l-1.6 2.8 l-2.2 -0.8 a6 6 0 0 1 -1.9 1.1 l-0.5 2.3 h-3.2 l-0.5 -2.3 a6 6 0 0 1 -1.9 -1.1 l-2.2 0.8 l-1.6 -2.8 l1.8 -1.5 a6 6 0 0 1 0 -2.2 l-1.8 -1.5 l1.6 -2.8 l2.2 0.8 a6 6 0 0 1 1.9 -1.1z" fill="#afb1b3"/><circle cx="9" cy="9" r="2.6" fill="#3c3f41"/></g></svg>
<div class="a" style="left:1870px;top:88px;width:16px;height:2px;background:#afb1b3;"></div>
<div class="t" style="left:1283px;top:122px;font-size:15px">智能问答</div>
<div class="t" style="left:1383px;top:122px;font-size:15px">AI 程序员</div>
<div class="a" style="left:1382px;top:154px;width:64px;height:2px;background:#4a88c7;"></div>
<svg style="left:1677px;top:122px" width="20" height="20" viewBox="0 0 20 20"><circle cx="10" cy="10" r="9" fill="none" stroke="#afb1b3" stroke-width="1.6"/><path d="M10 5 V15 M5 10 H15" stroke="#afb1b3" stroke-width="1.6"/></svg>
<div class="a" style="left:1717px;top:121px;width:2px;height:21px;background:#222426;"></div>
<svg style="left:1747px;top:122px" width="20" height="20" viewBox="0 0 20 20"><circle cx="9.5" cy="6" r="5" fill="none" stroke="#afb1b3" stroke-width="1.6"/><path d="M1 19.5 Q1.5 12 9.5 12 Q17.5 12 18 19.5" fill="none" stroke="#afb1b3" stroke-width="1.6"/></svg>
<div class="t" style="left:1774px;top:122px;font-size:15px">北京宏哥</div>
<svg style="left:1851px;top:128px" width="11" height="7" viewBox="0 0 11 7"><path d="M0 0 H11 L5.5 7Z" fill="#afb1b3"/></svg>
<div class="t" style="left:1893px;top:106px;transform-origin:0 0;transform:rotate(90deg) translate(0,-20px);font-size:13.3px;line-height:18px;color:#bbb">Database</div>
<svg style="left:1899px;top:83px" width="15" height="15" viewBox="0 0 15 15"><ellipse cx="7.5" cy="2.5" rx="6.5" ry="2.3" fill="#afb1b3"/><path d="M1 5 Q7.5 8.5 14 5 V7.3 Q7.5 10.8 1 7.3Z M1 9.5 Q7.5 13 14 9.5 V11.8 Q7.5 15.3 1 11.8Z" fill="#afb1b3"/></svg>
<svg style="left:1899px;top:192px" width="14" height="12" viewBox="0 0 14 12"><path d="M0 0 H14 V12 H0Z" fill="#afb1b3"/><path d="M3.5 0 V12 M7 0 V12 M10.5 0 V12 M0 4 H14 M0 8 H14" stroke="#3c3f41" stroke-width="1"/></svg>
<div class="t" style="left:1893px;top:211px;transform-origin:0 0;transform:rotate(90deg) translate(0,-20px);font-size:13.5px;line-height:18px;color:#bbb">SciView</div>
<svg style="left:1899px;top:285px" width="18" height="18" viewBox="0 0 18 18"><g transform="scale(0.7)"><path d="M8.3 0 L12.7 0 L14.3 2.7 L22 2.7 L23.5 6.5 L21.8 9.8 L24.7 15 L23 18.5 L18.3 18.5 L16.5 24 L10.5 24.5 L8.3 21 L2.5 21 L0.8 17 L3 13 L0 9.5 L1.8 6 L6 6Z" fill="#c4c4c4"/><path d="M9.8 1.8 L6.8 7.3 H21.8 M3 7.3 L11.5 21.8 M3.8 20 H11.2 M11.8 21.8 L18.8 10.5 L22.8 16.2" fill="none" stroke="#2d2f30" stroke-width="2.6"/></g></svg>
<div class="t" style="left:1893px;top:304px;transform-origin:0 0;transform:rotate(90deg) translate(0,-20px);font-size:13px;line-height:18px;color:#e8e8e8">通义灵码</div>
<div class="a" style="left:1267px;top:157px;width:626px;height:517px;overflow:hidden">
<div class="a" style="left:15px;top:-60px;width:579px;height:88px;background:#353739;border-radius:10px"></div>
<div class="t" style="left:31px;top:-7px;font-size:15px;color:#bbb"><span style="font-family:'Liberation Serif',serif;color:#c89664;font-size:14.5px;letter-spacing:0.3px">ma in. py</span>即可启动游戏。</div>
<div class="a" style="left:15px;top:38px;width:579px;height:144px;background:#353739;border-radius:10px"></div>
</div>
<svg style="left:1298px;top:207px" width="25" height="25" viewBox="0 0 25 25"><circle cx="12.5" cy="12.5" r="12.5" fill="#f39c34"/><text x="12.5" y="18" text-anchor="middle" font-size="15" fill="#fff" font-weight="bold">北</text></svg>
<div class="t" style="left:1332px;top:210px;font-size:15px">北京宏哥</div>
<div class="t" style="left:1847px;top:210px;transform:translateX(-100%);color:#999;font-size:15.3px">今天 09:03</div>
<div class="a" style="left:1298px;top:246px;width:99px;height:26px;background:#3a3d3f;border-radius:4px"></div>
<svg style="left:1308px;top:250px" width="17" height="20"><use href="#pyfile"/></svg>
<div class="t" style="left:1333px;top:249px;">main.py</div>
<div class="a" style="left:1298px;top:286px;width:548px;height:1px;background:#3b3d3f;"></div>
<div class="t" style="left:1298px;top:300px;font-size:15.7px">增加玩家命的概念，几条命就能继续玩几次，而不是直接退出。</div>
<div class="a" style="left:1282px;top:349px;width:579px;height:326px;background:#353739;border-radius:10px 10px 0 0"></div>
<svg style="left:1298px;top:361px" width="25" height="25" viewBox="0 0 25 25"><defs><linearGradient id="tyg" x1="0" y1="0" x2="0.6" y2="1"><stop offset="0" stop-color="#7f7dff"/><stop offset="1" stop-color="#6a2bf0"/></linearGradient></defs><path d="M8.3 0 L12.7 0 L14.3 2.7 L22 2.7 L23.5 6.5 L21.8 9.8 L24.7 15 L23 18.5 L18.3 18.5 L16.5 24 L10.5 24.5 L8.3 21 L2.5 21 L0.8 17 L3 13 L0 9.5 L1.8 6 L6 6Z" fill="url(#tyg)"/><path d="M9.8 1.8 L6.8 7.3 H21.8 M3 7.3 L11.5 21.8 M3.8 20 H11.2 M11.8 21.8 L18.8 10.5 L22.8 16.2" fill="none" stroke="#fff" stroke-width="2.1" stroke-linejoin="miter"/></svg>
<div class="t" style="left:1328px;top:364px;font-size:15px">通义灵码</div>
<div class="t" style="left:1402px;top:364px;font-size:15px;color:#999">@AI 程序员</div>
<svg style="left:1735px;top:362px" width="19" height="20" viewBox="0 0 19 20"><path d="M5 1 H12 L18 7 V17 H5Z" fill="none" stroke="#afb1b3" stroke-width="1.6"/><path d="M11.5 1 V7.5 H18" fill="none" stroke="#afb1b3" stroke-width="1.6"/><path d="M2 4.5 V19.5 H13" fill="none" stroke="#afb1b3" stroke-width="1.6"/></svg>
<svg style="left:1779px;top:362px" width="20" height="20" viewBox="0 0 20 20"><path d="M1 9 H5 V19 H1Z" fill="none" stroke="#afb1b3" stroke-width="1.6"/><path d="M5 9 L9.5 1.5 Q12.5 1.5 12 5 L11.3 8 H17 Q19 8.5 18.5 11 L17 17 Q16.5 19 14.5 19 H5" fill="none" stroke="#afb1b3" stroke-width="1.6"/></svg>
<svg style="left:1824px;top:362px" width="20" height="20" viewBox="0 0 20 20"><path d="M1 1 H5 V11 H1Z" fill="none" stroke="#afb1b3" stroke-width="1.6"/><path d="M5 11 L9.5 18.5 Q12.5 18.5 12 15 L11.3 12 H17 Q19 11.5 18.5 9 L17 3 Q16.5 1 14.5 1 H5" fill="none" stroke="#afb1b3" stroke-width="1.6"/></svg>
<div class="t" style="left:1298px;top:421px;font-size:16px;color:#c4c4c4">为了增加玩家命的概念，我们需要在<span style="font-family:'Liberation Mono',monospace;color:#c8875a;font-size:13px">Player</span>类中添加一个属性来跟踪玩家的剩</div>
<div class="t" style="left:1298px;top:450px;font-size:16px;color:#c4c4c4">余生命值，并在游戏循环中处理玩家生命值的变化。当玩家被敌机击中时，减</div>
<div class="t" style="left:1298px;top:479px;font-size:16px;color:#c4c4c4">少玩家的生命值而不是直接退出游戏。当玩家的生命值耗尽时，游戏才会退</div>
<div class="t" style="left:1298px;top:508px;font-size:16px;color:#c4c4c4">出。</div>
<div class="t" style="left:1298px;top:542px;font-size:16px;color:#c4c4c4">以下是修改后的代码：</div>
<div class="a" style="left:1298px;top:585px;width:548px;height:30px;background:#393c3e;border-radius:6px"></div>
<svg style="left:1312px;top:591px" width="17" height="20"><use href="#pyfile"/></svg>
<div class="t" style="left:1338px;top:590px;">main.py</div>
<div class="t" style="left:1708px;top:590px;color:#8a8a8a">2 / 2</div>
<svg style="left:1763px;top:592px" width="16" height="16" viewBox="0 0 16 16"><circle cx="8" cy="8" r="7" fill="none" stroke="#499c54" stroke-width="1.6" stroke-dasharray="2 1.6"/><path d="M4.5 8 L7 10.5 L11.5 5.5" fill="none" stroke="#499c54" stroke-width="1.5"/></svg>
<div class="t" style="left:1786px;top:590px;font-size:16px;color:#aaa">已应用</div>
<div class="a" style="left:1282px;top:656px;width:579px;height:19px;overflow:hidden"><div class="t" style="left:16px;top:1px;font-size:17px;font-weight:bold;color:#c4c4c4">修改说明：</div></div>
<div class="a" style="left:1881px;top:493px;width:11px;height:133px;background:#4f5153;border-radius:2px"></div>
<div class="a" style="left:1282px;top:680px;width:597px;height:84px;background:#2b2b2b;border-radius:12px 12px 0 0"></div>
<div class="a" style="left:1282px;top:720px;width:597px;height:1px;background:#3a3c3e;"></div>
<svg style="left:1302px;top:696px" width="12" height="8" viewBox="0 0 12 8"><path d="M1 1.5 L6 6.5 L11 1.5" fill="none" stroke="#afb1b3" stroke-width="1.5"/></svg>
<div class="t" style="left:1323px;top:689px;font-size:16.5px;color:#c4c4c4">工作区</div>
<div class="t" style="left:1385px;top:689px;font-size:15px;color:#999">最新</div>
<svg style="left:1424px;top:695px" width="12" height="8" viewBox="0 0 12 8"><path d="M1 1.5 L6 6.5 L11 1.5" fill="none" stroke="#afb1b3" stroke-width="1.5"/></svg>
<svg style="left:1631px;top:691px" width="16" height="16" viewBox="0 0 16 16"><circle cx="8" cy="8" r="7" fill="none" stroke="#499c54" stroke-width="1.6" stroke-dasharray="2 1.6"/><path d="M4.5 8 L7 10.5 L11.5 5.5" fill="none" stroke="#499c54" stroke-width="1.5"/></svg>
<div class="t" style="left:1654px;top:689px;font-size:16px;color:#aaa">已应用</div>
<div class="t" style="left:1714px;top:689px;font-size:16px;color:#589df6">查看变更</div>
<div class="t" style="left:1789px;top:689px;font-size:16px;color:#589df6">拒绝</div>
<div class="t" style="left:1834px;top:689px;font-size:16px;color:#589df6">接受</div>
<svg style="left:1302px;top:732px" width="17" height="20"><use href="#pyfile"/></svg>
<div class="t" style="left:1328px;top:731px;">main.py</div>
<div class="t" style="left:1801px;top:731px;color:#999">+7 -1</div>
<div class="t" style="left:1850px;top:731px;color:#589df6">M</div>
<div class="a" style="left:1282px;top:778px;width:597px;height:121px;background:#2b2b2b;border-radius:12px"></div>
<div class="a" style="left:1298px;top:790px;width:24px;height:25px;background:#3c3f41;border-radius:4px"></div>
<svg style="left:1302px;top:794px" width="16" height="16" viewBox="0 0 16 16"><path d="M8 1 V15 M1 8 H15" stroke="#afb1b3" stroke-width="1.6"/></svg>
<div class="t" style="left:1327px;top:792px;font-size:16.5px;color:#c4c4c4">添加上下文</div>
<div class="t" style="left:1306px;top:838px;font-size:16.5px;color:#8c8c8c">详细描述你的任务或者问题</div>
<div class="t" style="left:1300px;top:868px;color:#aaa">qwen-2.5</div>
<svg style="left:1376px;top:875px" width="10" height="7" viewBox="0 0 10 7"><path d="M1 1 L5 5.5 L9 1" fill="none" stroke="#afb1b3" stroke-width="1.6"/></svg>
<div class="t" style="left:35px;top:920px;">Run:</div>
<svg style="left:93px;top:921px" width="18" height="18" viewBox="0 0 18 18"><g transform="scale(1.45)"><path d="M5.6 0 C3.4 0 3.2 1 3.2 2.2 V3.6 H6.2 V4.2 H2 C0.7 4.2 0 5.2 0 6.6 C0 8 0.7 8.9 2 8.9 H3 V7.4 C3 6.1 4 5.3 5.2 5.3 H7.6 C8.6 5.3 9.4 4.5 9.4 3.5 V2.2 C9.4 1 8.4 0 6.9 0 Z" fill="#3a6a8c"/><path d="M5.6 0 C3.4 0 3.2 1 3.2 2.2 V3.6 H6.2 V4.2 H2 C0.7 4.2 0 5.2 0 6.6 C0 8 0.7 8.9 2 8.9 H3 V7.4 C3 6.1 4 5.3 5.2 5.3 H7.6 C8.6 5.3 9.4 4.5 9.4 3.5 V2.2 C9.4 1 8.4 0 6.9 0 Z" fill="#8c7637" transform="rotate(180 6 6.2)"/><circle cx="4.6" cy="1.7" r="0.6" fill="#3c3f41"/><circle cx="7.4" cy="10.7" r="0.6" fill="#3c3f41"/></g></svg>
<div class="t" style="left:116px;top:920px;">main (2)</div>
<svg style="left:184px;top:926px" width="9" height="9" viewBox="0 0 9 9"><path d="M0 0 L9 9 M9 0 L0 9" stroke="#6f7173" stroke-width="1.3"/></svg>
<div class="a" style="left:76px;top:943px;width:131px;height:3px;background:#6a6d70;"></div>
<div class="a" style="left:62px;top:948px;width:1px;height:18px;background:#323232;"></div>
<div class="t" style="left:41px;top:946px;font-size:13px;line-height:16px;color:#afb1b3">&#8250;&#8250;</div>
<div class="t" style="left:77px;top:946px;font-size:13px;line-height:16px;color:#afb1b3">&#8250;&#8250;</div>
<svg style="left:43px;top:975px" width="11" height="17" viewBox="0 0 11 17"><circle cx="2.5" cy="2.5" r="2" fill="#afb1b3"/><circle cx="2.5" cy="14.5" r="2" fill="#afb1b3"/><circle cx="9" cy="4" r="2" fill="#afb1b3"/><path d="M2.5 3 V15 M9 5 Q9 9 2.5 11" fill="none" stroke="#afb1b3" stroke-width="1.8"/></svg>
<div class="t" style="left:63px;top:973px;font-size:14px">Version Control</div>
<svg style="left:188px;top:976px" width="10" height="12" viewBox="0 0 10 12"><path d="M0 0 L10 6 L0 12Z" fill="#afb1b3"/></svg>
<div class="t" style="left:206px;top:973px;font-size:14px;color:#e8e8e8">Run</div>
<svg style="left:256px;top:976px" width="13" height="11" viewBox="0 0 13 11"><path d="M0 1 H2.5 M0 5.5 H2.5 M0 10 H2.5 M4 1 H13 M4 5.5 H13 M4 10 H13" stroke="#afb1b3" stroke-width="2"/></svg>
<div class="t" style="left:275px;top:973px;font-size:14px">TODO</div>
<svg style="left:340px;top:975px" width="13" height="13" viewBox="0 0 13 13"><circle cx="6.5" cy="6.5" r="6.5" fill="#afb1b3"/><rect x="5.5" y="2.5" width="2" height="5.5" fill="#3c3f41"/><rect x="5.5" y="9" width="2" height="2" fill="#3c3f41"/></svg>
<div class="t" style="left:360px;top:973px;font-size:14px">Problems</div>
<svg style="left:445px;top:975px" width="14" height="12" viewBox="0 0 14 12"><rect x="0" y="0" width="14" height="12" fill="#afb1b3"/><path d="M2.5 3 L5 5.5 L2.5 8" fill="none" stroke="#3c3f41" stroke-width="1.4"/><rect x="6" y="8.5" width="5" height="1.5" fill="#3c3f41"/></svg>
<div class="t" style="left:465px;top:973px;font-size:14px">Terminal</div>
<svg style="left:546px;top:974px" width="14" height="15" viewBox="0 0 14 15"><path d="M7 0 L14 3.5 L7 7 L0 3.5Z" fill="#afb1b3"/><path d="M0 7 L7 10.5 L14 7 M0 10.5 L7 14 L14 10.5" fill="none" stroke="#afb1b3" stroke-width="1.7"/></svg>
<div class="t" style="left:566px;top:973px;font-size:14px">Python Packages</div>
<svg style="left:703px;top:974px" width="15" height="15" viewBox="0 0 15 15"><g transform="scale(1.2)"><path d="M5.6 0 C3.4 0 3.2 1 3.2 2.2 V3.6 H6.2 V4.2 H2 C0.7 4.2 0 5.2 0 6.6 C0 8 0.7 8.9 2 8.9 H3 V7.4 C3 6.1 4 5.3 5.2 5.3 H7.6 C8.6 5.3 9.4 4.5 9.4 3.5 V2.2 C9.4 1 8.4 0 6.9 0 Z" fill="#afb1b3"/><path d="M5.6 0 C3.4 0 3.2 1 3.2 2.2 V3.6 H6.2 V4.2 H2 C0.7 4.2 0 5.2 0 6.6 C0 8 0.7 8.9 2 8.9 H3 V7.4 C3 6.1 4 5.3 5.2 5.3 H7.6 C8.6 5.3 9.4 4.5 9.4 3.5 V2.2 C9.4 1 8.4 0 6.9 0 Z" fill="#afb1b3" transform="rotate(180 6 6.2)"/></g></svg>
<div class="t" style="left:724px;top:973px;font-size:14px">Python Console</div>
<svg style="left:1799px;top:974px" width="16" height="16" viewBox="0 0 16 16"><path d="M8 0 A8 8 0 0 1 16 8 V16 H8 A8 8 0 0 1 8 0Z" fill="#f0a732"/><text x="7.5" y="13" text-anchor="middle" font-size="12" font-family="Liberation Sans" fill="#2b2b2b">5</text></svg>
<div class="t" style="left:1820px;top:973px;font-size:14px">Event Log</div>
<svg style="left:8px;top:999px" width="15" height="15" viewBox="0 0 15 15"><rect x="3.5" y="0.5" width="11" height="11" fill="none" stroke="#afb1b3" stroke-width="1.3"/><path d="M0.7 3.5 V14.3 H11.5" fill="none" stroke="#afb1b3" stroke-width="1.3"/></svg>
<div class="t" style="left:35px;top:997px;"><span style="font-size:16.4px">License expired: Your PyCharm subscription expired on 2023/12/31.If you don't renew it before 2297/10/15, you will no longer be able to use the product. // Renew License&nbsp;&nbsp; Fallback Options (2 minutes ago)</span></div>
<div class="t" style="left:1740px;top:997px;">39:1</div>
<div class="t" style="left:1786px;top:997px;">Python 3.10</div>
<svg style="left:1885px;top:998px" width="20" height="20" viewBox="0 0 20 20"><defs><linearGradient id="tyg2" x1="0" y1="0" x2="0.6" y2="1"><stop offset="0" stop-color="#7f7dff"/><stop offset="1" stop-color="#6a2bf0"/></linearGradient></defs><g transform="scale(0.8)"><path d="M8.3 0 L12.7 0 L14.3 2.7 L22 2.7 L23.5 6.5 L21.8 9.8 L24.7 15 L23 18.5 L18.3 18.5 L16.5 24 L10.5 24.5 L8.3 21 L2.5 21 L0.8 17 L3 13 L0 9.5 L1.8 6 L6 6Z" fill="url(#tyg2)"/><path d="M9.8 1.8 L6.8 7.3 H21.8 M3 7.3 L11.5 21.8 M3.8 20 H11.2 M11.8 21.8 L18.8 10.5 L22.8 16.2" fill="none" stroke="#fff" stroke-width="2.1" stroke-linejoin="miter"/></g></svg>
<div class="a" style="left:1464px;top:861px;width:422px;height:95px;background:#4b4d4f;border:1px solid #555759"></div>
<svg style="left:1477px;top:872px" width="18" height="16" viewBox="0 0 18 16"><path d="M9 0.5 L17.5 15.5 H0.5Z" fill="#f0a732"/><rect x="8" y="5" width="2" height="6" fill="#3c3f41"/><rect x="8" y="12.2" width="2" height="2" fill="#3c3f41"/></svg>
<div class="t" style="left:1504px;top:872px;font-weight:bold;color:#dcdcdc;font-size:16px">License expired</div>
<div class="t" style="left:1504px;top:895px;color:#c8c8c8">Your PyCharm subscription expired on...</div>
<svg style="left:1858px;top:902px" width="15" height="9" viewBox="0 0 15 9"><path d="M1 1 L7.5 7.5 L14 1" fill="none" stroke="#777a7c" stroke-width="1.6"/></svg>
<div class="t" style="left:1504px;top:926px;color:#589df6;font-size:16px">Renew License</div>
<div class="t" style="left:1631px;top:926px;color:#589df6;font-size:16px">Fallback Options</div></body></html>
